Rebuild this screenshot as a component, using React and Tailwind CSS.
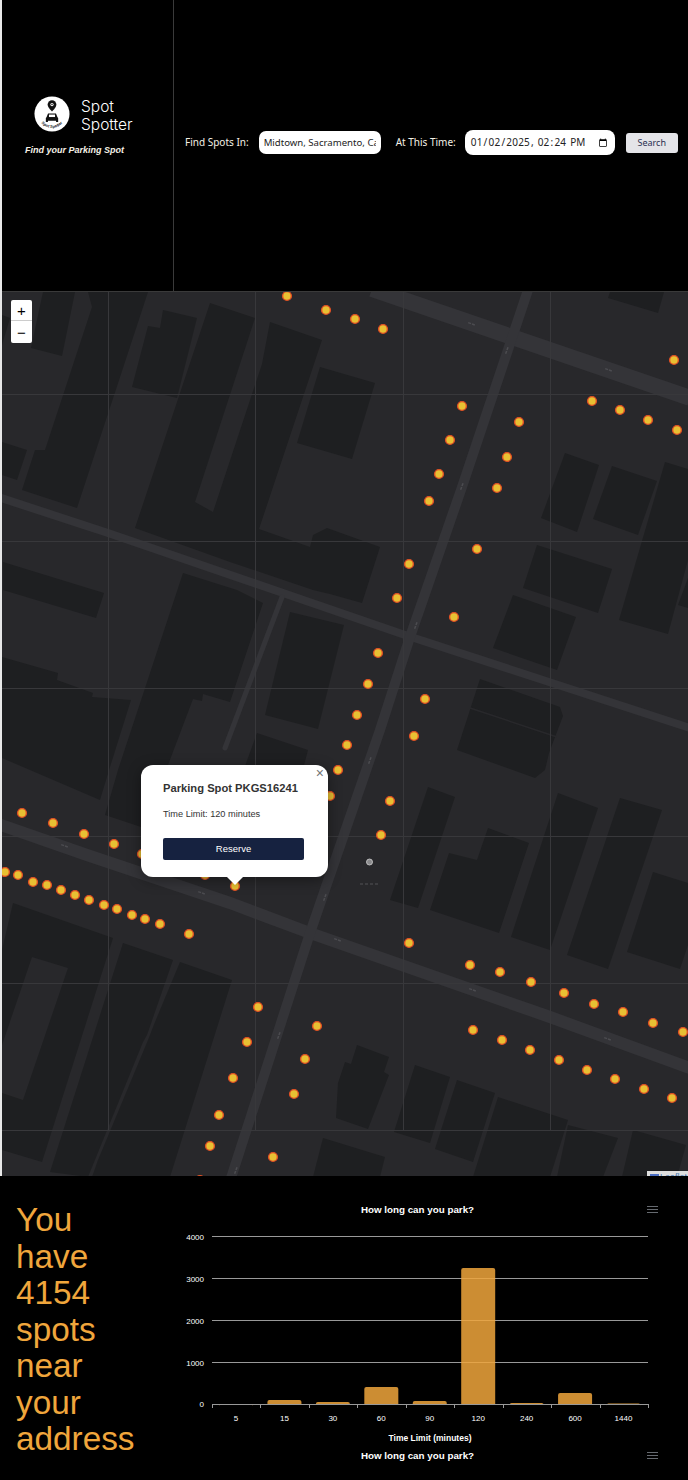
import React from "react";

// all map coordinates are page pixels, the svg viewBox starts at the map's corner
const buildings = [
  "43,292 75,292 62,356 31,348",
  "88,292 148,292 77,508 22,490 35,450 45,450 92,307",
  "2,442 27,450 17,480 2,475",
  "2,315 10,318 2,345",
  "163,310 197,318 177,398 132,387 148,326 160,328",
  "210,303 255,318 195,502 213,512 262,364 270,322 322,340 259,529 310,547 313,535 327,528 380,547 362,603 330,594 313,590 230,562 135,528",
  "320,367 375,383 352,459 297,443",
  "610,292 664,292 658,313 608,298",
  "565,453 599,465 577,532 541,518",
  "612,466 657,481 638,535 593,519",
  "665,462 688,469 688,560 668,634 619,620",
  "678,605 688,578 688,608",
  "537,545 612,569 598,613 523,588",
  "513,595 576,617 557,670 493,648",
  "480,679 560,707 563,716 549,753 545,770 535,778 457,750",
  "428,787 455,797 418,908 390,900",
  "488,828 529,843 499,933 430,910 449,853 477,860",
  "558,793 598,808 550,950 511,937",
  "620,798 662,810 608,969 567,955",
  "653,872 688,883 688,945 680,969 627,952",
  "357,1045 389,1057 384,1072 389,1075 368,1129 336,1118 338,1083 345,1062 351,1064",
  "415,1065 450,1077 430,1143 394,1132",
  "457,1080 495,1093 473,1162 435,1149",
  "498,1097 568,1120 550,1177 473,1177",
  "568,1125 618,1138 603,1177 557,1177",
  "633,1130 686,1145 677,1177 622,1177",
  "323,1138 385,1157 380,1177 313,1177",
  "3,562 104,593 96,618 3,590",
  "183,573 237,590 263,603 230,702 203,694 202,701 193,699 168,765 150,830 105,815 118,770",
  "2,657 58,673 57,680 93,693 92,697 131,700 110,767 100,800 2,758",
  "290,612 344,625 318,729 265,715",
  "257,733 308,750 295,800 240,780",
  "13,903 113,938 42,1162 2,1150 2,950",
  "123,943 173,960 147,1035 143,1042 88,1177 50,1172",
  "180,962 232,980 170,1177 92,1177 98,1160 148,1040 155,1022",
];

const spots = [
  [287, 296], [326, 310], [355, 319], [383, 329], [674, 360], [592, 401], [620, 410], [648, 420], [677, 430],
  [462, 406], [519, 422], [450, 440], [507, 457], [439, 474], [497, 488], [429, 501], [477, 549], [409, 564],
  [397, 598], [454, 617], [378, 653], [368, 684], [425, 699], [357, 715], [414, 736], [347, 745], [338, 770],
  [330, 796], [390, 801], [381, 835], [235, 886], [409, 943], [470, 965], [500, 972], [531, 982], [564, 993],
  [594, 1004], [623, 1012], [653, 1023], [683, 1032], [473, 1030], [502, 1040], [530, 1050], [559, 1060],
  [587, 1070], [615, 1079], [644, 1089], [672, 1098], [258, 1007], [317, 1026], [247, 1042], [305, 1059],
  [233, 1078], [294, 1094], [273, 1157], [5, 872], [18, 875], [33, 882], [47, 885], [61, 890], [75, 895],
  [89, 900], [104, 905], [117, 909], [132, 915], [145, 919], [160, 924], [189, 934], [219, 1115], [210, 1146],
  [200, 1180], [22, 813], [53, 823], [84, 834], [114, 844], [142, 854], [205, 875],
];

const smudges = [
  [472, 324, 20], [507, 350, -70], [609, 370, 20], [462, 486, -70], [416, 625, -70], [370, 760, -70],
  [325, 897, -70], [338, 940, 20], [473, 990, 20], [608, 1039, 20], [279, 1035, -70], [236, 1170, -70],
  [65, 846, 20], [202, 893, 20],
];

const bars = [
  { label: "5", top: 1404 },
  { label: "15", top: 1400 },
  { label: "30", top: 1402 },
  { label: "60", top: 1387 },
  { label: "90", top: 1401 },
  { label: "120", top: 1268 },
  { label: "240", top: 1403 },
  { label: "600", top: 1393 },
  { label: "1440", top: 1403.5 },
];

const MapDrawing = () => (
  <svg viewBox="2 292 686 884" className="block h-full w-full">
    {buildings.map((p) => (
      <polygon key={p} points={p} fill="#1e1f21" />
    ))}
    <polygon points="32,957 68,968 23,1100 2,1093 2,1045" fill="#28282b" />
    <line x1="470" y1="708" x2="557" y2="737" stroke="#28282b" strokeWidth="1.5" />
    <g fill="none" stroke="#343438">
      <path d="M372 289L690 398" strokeWidth="16" />
      <path d="M-2 497L108 533L283 593L405 635L690 728" strokeWidth="8" />
      <path d="M-2 824L87 855L230 903L310 933L550 1017L690 1068" strokeWidth="12" />
      <path d="M528 290L462 487L410 637L380 730L310 933L231 1178" strokeWidth="10" />
      <path d="M282 597L225 748" strokeWidth="5" strokeLinecap="round" />
    </g>
    <g stroke="#38383b" strokeWidth="1">
      {[108.5, 255.5, 403.5, 550.5].map((x) => (
        <line key={x} x1={x} y1="292" x2={x} y2="1130" />
      ))}
      {[394.5, 541.5, 688.5, 836.5, 983.5, 1130.5].map((y) => (
        <line key={y} x1="2" y1={y} x2="688" y2={y} />
      ))}
    </g>
    {smudges.map(([x, y, r]) => (
      <line
        key={`${x}-${y}`}
        x1={x - 4}
        y1={y}
        x2={x + 4}
        y2={y}
        stroke="#4c4c50"
        strokeWidth="1.5"
        strokeDasharray="3 1"
        transform={`rotate(${r} ${x} ${y})`}
      />
    ))}
    <circle cx="369.5" cy="862" r="3" fill="#8a8a8c" stroke="#d0d0d0" strokeWidth="0.8" />
    <line x1="360" y1="884" x2="379" y2="884" stroke="#444448" strokeWidth="1.5" strokeDasharray="3 2" />
    {spots.map(([x, y]) => (
      <circle key={`${x}-${y}`} cx={x} cy={y} r="4.4" fill="#e8c033" stroke="#e04f24" strokeWidth="1.4" />
    ))}
  </svg>
);

const Popup = () => (
  <div className="absolute left-[139px] top-[473px] h-[112px] w-[187px] rounded-xl bg-white pl-[22px] pt-[17px] font-['Liberation_Sans',sans-serif] text-[#333] shadow-[0_3px_14px_rgba(0,0,0,0.4)]">
    <span className="absolute right-[4px] top-0 text-[14px] leading-[16px] text-[#757575]">×</span>
    <h3 className="text-[11.2px] font-bold leading-[13px]">Parking Spot PKGS16241</h3>
    <p className="mt-[14px] text-[9.2px] leading-[11px]">Time Limit: 120 minutes</p>
    <button className="mt-[18px] block h-[22px] w-[141px] rounded-[2px] bg-[#162240] text-[9.5px] font-medium text-white">
      Reserve
    </button>
    <div className="absolute left-[86px] top-[112px] h-0 w-0 border-x-[8px] border-t-[8px] border-x-transparent border-t-white" />
  </div>
);

const Logo = () => (
  <svg viewBox="0 0 38 38" className="mb-[3px] h-[36px] w-[36px] shrink-0">
    <circle cx="19" cy="19" r="18.5" fill="#fff" />
    <path d="M19 4.5a4.6 4.6 0 0 0-4.6 4.6c0 3.2 4.6 7.4 4.6 7.4s4.6-4.2 4.6-7.4A4.6 4.6 0 0 0 19 4.5z" fill="#111" />
    <circle cx="19" cy="9" r="1.7" fill="#fff" />
    <circle cx="19" cy="9" r="0.8" fill="#111" />
    <path d="M14.8 18.5h8.4l1.6 4 .7.6v4.4h-2.2v-1.3h-8.6v1.3h-2.2v-4.4l.7-.6z" fill="#111" />
    <rect x="15.8" y="19.6" width="6.4" height="2.6" fill="#fff" />
    <path id="logoArc" d="M5.2 24.5A15 15 0 0 0 32.8 24.5" fill="none" />
    <text fontSize="4.2" fontWeight="700" fill="#111" fontFamily="Liberation Sans, sans-serif">
      <textPath href="#logoArc" startOffset="50%" textAnchor="middle">Spot Spotter</textPath>
    </text>
  </svg>
);

const Chart = ({ showPlot }) => (
  <svg viewBox="170 1190 518 290" className="absolute inset-0 h-[290px] w-[518px]" fontFamily="Liberation Sans, sans-serif">
    <text x="417.5" y="1212.5" textAnchor="middle" fontSize="9.8" fontWeight="700" fill="#fff">How long can you park?</text>
    <g stroke="#666a70" strokeWidth="1">
      <line x1="647" y1="1206.5" x2="658" y2="1206.5" />
      <line x1="647" y1="1209.5" x2="658" y2="1209.5" />
      <line x1="647" y1="1212.5" x2="658" y2="1212.5" />
    </g>
    {showPlot && (
      <>
        {[1236.5, 1278.5, 1320.5, 1362.5].map((y, i) => (
          <g key={y}>
            <line x1="212" y1={y} x2="648" y2={y} stroke="#999" strokeWidth="1" />
            <text x="204" y={y + 3} textAnchor="end" fontSize="8" fill="#fff">{[4000, 3000, 2000, 1000][i]}</text>
          </g>
        ))}
        <text x="204" y="1407" textAnchor="end" fontSize="8" fill="#fff">0</text>
        {bars.map((b, i) => {
          const x = 219 + i * 48.44;
          return (
            <g key={b.label}>
              <path
                d={`M${x} 1404V${b.top + 2}Q${x} ${b.top} ${x + 2} ${b.top}H${x + 32}Q${x + 34} ${b.top} ${x + 34} ${b.top + 2}V1404Z`}
                fill="#f0a63c"
                fillOpacity="0.85"
              />
              <text x={x + 17} y="1421" textAnchor="middle" fontSize="8" fill="#fff">{b.label}</text>
            </g>
          );
        })}
        <line x1="212" y1="1404.5" x2="648" y2="1404.5" stroke="#999" strokeWidth="1" />
        {Array.from({ length: 10 }, (_, i) => Math.round(212 + i * 48.44) + 0.5).map((x) => (
          <line key={x} x1={x} y1="1404" x2={x} y2="1408" stroke="#999" strokeWidth="1" />
        ))}
        <text x="430" y="1441" textAnchor="middle" fontSize="8.5" fontWeight="700" fill="#fff">Time Limit (minutes)</text>
      </>
    )}
  </svg>
);

const App = () => {
  return (
    <div className="h-[1480px] w-[688px] overflow-hidden bg-black">
      <div className="bg-[#e8e8e8] pl-[2px]">
        <header className="flex h-[292px] border-b border-[#3a3a3a] bg-black">
          <div className="w-[172px] shrink-0 border-r border-[#3a3a3a] pl-[23px] pt-[96px]">
            <div className="flex items-center gap-[11px] pl-[9px]">
              <Logo />
              <div className="font-['Inter',sans-serif] text-[15.5px] font-light leading-[18px] text-white">
                <div>Spot</div>
                <div>Spotter</div>
              </div>
            </div>
            <p className="mt-[10px] font-['Liberation_Sans',sans-serif] text-[9px] font-bold italic leading-[11px] text-[#f5f1e6]">
              Find your Parking Spot
            </p>
          </div>
          <div className="flex flex-1 items-center pb-[6px] pl-[11px] font-['Noto_Sans',sans-serif] text-[10px] text-[#f5f1e6]">
            <label className="whitespace-nowrap">Find Spots In:</label>
            <input
              readOnly
              value="Midtown, Sacramento, California"
              className="ml-[10px] h-[23px] w-[122px] rounded-[7px] bg-white px-[5px] text-[9.6px] text-[#222] outline-none"
            />
            <label className="ml-[15px] whitespace-nowrap">At This Time:</label>
            <input
              type="datetime-local"
              defaultValue="2025-01-02T14:24"
              className="ml-[9px] h-[25px] w-[150px] rounded-[8px] bg-white px-[5px] font-['Noto_Sans',sans-serif] text-[10px] tracking-[0.2px] text-[#222] outline-none"
            />
            <button className="ml-[11px] h-[20px] w-[52px] rounded-[3px] bg-[#e4e4e8] text-[9px] text-[#2a3050]">
              Search
            </button>
          </div>
        </header>
        <div className="relative h-[884px] overflow-hidden bg-[#28282b]">
          <MapDrawing />
          <div className="absolute left-[9px] top-[8px] w-[21px] overflow-hidden rounded-[2px] bg-white font-['Liberation_Sans',sans-serif] text-black">
            <div className="flex h-[21px] items-center justify-center border-b border-[#ccc] text-[15px] leading-none">+</div>
            <div className="flex h-[22px] items-center justify-center text-[15px] leading-none">−</div>
          </div>
          <Popup />
          <div className="absolute bottom-[-8px] right-0 flex h-[13px] w-[41px] items-start gap-[1px] bg-[#dedede] pl-[3px] font-['Liberation_Sans',sans-serif] text-[9px] leading-[13px] text-[#4a7ab0]">
            <span className="mt-[3px] h-[6px] w-[9px] shrink-0 bg-[#4c6fc4]" />
            <span>Leaflet</span>
          </div>
        </div>
      </div>
      <footer className="flex h-[304px]">
        <div className="w-[170px] shrink-0 pl-[16px] pt-[26px] font-['Liberation_Sans',sans-serif] text-[33.3px] leading-[36.5px] text-[#f0a63c]">
          <p className="w-[125px]">You have 4154 spots near your address</p>
        </div>
        <div className="relative flex-1">
          <div className="absolute left-0 top-[14px] h-[290px] w-[518px]">
            <Chart showPlot />
          </div>
          <div className="absolute left-0 top-[260px] h-[290px] w-[518px]">
            <Chart showPlot={false} />
          </div>
        </div>
      </footer>
    </div>
  );
};

export default App;
